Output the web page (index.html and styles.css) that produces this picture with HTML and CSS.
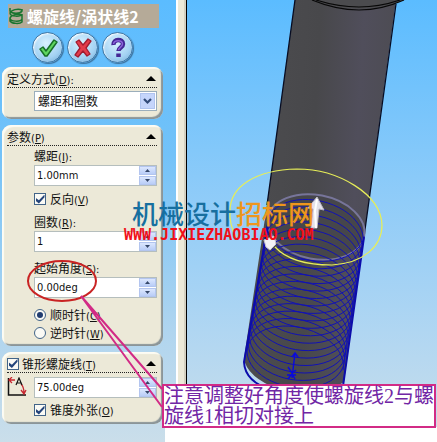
FILE: index.html
```html
<!DOCTYPE html>
<html lang="zh-CN">
<head>
<meta charset="utf-8">
<title>螺旋线/涡状线2</title>
<link rel="stylesheet" href="styles.css">
</head>
<body>
<main class="app">
  <form class="panel">
    <h1 class="title">
      <svg class="title-icon" width="16" height="18" viewBox="0 0 16 18" fill="none" stroke="#18752f" stroke-width="1.500">
        <path d="M2 1v3c2 3 10 3 12 0V2M14 3C10 1 3 3 2 6c0 4 11 4 12 1M14 8C10 6 3 8 2 11c0 4 11 4 12 1V7M2 11v3c2 3 10 3 12 1v-3"/>
      </svg>
      <span>螺旋线/涡状线2</span>
    </h1>
    <div class="actions">
      <button class="round" type="button" aria-label="确定">
        <svg width="22" height="22" viewBox="0 0 22 22"><path d="M3 12l3-2 3 4 8-11 3 2L10 19H8z" fill="#5fd55f" stroke="#176f28" stroke-width="1.500" stroke-linejoin="round"/></svg>
      </button>
      <button class="round" type="button" aria-label="取消">
        <svg width="22" height="22" viewBox="0 0 22 22"><path d="M4 5l3-2 4 5 5-6 3 2-5 7 4 6-3 2-4-5-5 6-3-2 5-7z" fill="#e33b4b" stroke="#a01b30" stroke-width="1.300" stroke-linejoin="round"/></svg>
      </button>
      <button class="round" type="button" aria-label="帮助">
        <svg width="22" height="22" viewBox="0 0 22 22" fill="none"><path d="M6.500 8C6 1.500 16 1.500 16 7c0 3.500-4.500 3.500-4.500 7M11.500 16.500v3.500" stroke="#442794" stroke-width="4.500"/><path d="M6.500 7C7 2.500 15.500 2.500 15.500 7c0 3-4 3.500-4 6" stroke="#8a62d8" stroke-width="1.500"/></svg>
      </button>
    </div>

    <section class="group">
      <header class="head"><label for="mode">定义方式<span class="key">(<u>D</u>):</span></label><button class="fold" type="button" aria-label="折叠"></button></header>
      <div class="body mode-body">
        <div class="combo">
          <select id="mode"><option>螺距和圈数</option></select>
          <span class="combo-arrow"><svg width="9" height="7" viewBox="0 0 9 7"><path d="M1 1l3.500 3.500L8 1" fill="none" stroke="#324a78" stroke-width="2.200"/></svg></span>
        </div>
      </div>
    </section>

    <section class="group">
      <header class="head"><span>参数<span class="key">(<u>P</u>)</span></span><button class="fold" type="button" aria-label="折叠"></button></header>
      <div class="body params">
        <label class="caption" for="pitch">螺距<span class="key">(<u>I</u>):</span></label>
        <div class="spin"><input id="pitch" type="text" value="1.00mm"><span class="steps"><button type="button" class="up" aria-label="增加"></button><button type="button" class="down" aria-label="减少"></button></span></div>
        <label class="check"><input type="checkbox" checked><span>反向<span class="key">(<u>V</u>)</span></span></label>
        <label class="caption" for="turns">圈数<span class="key">(<u>R</u>):</span></label>
        <div class="spin"><input id="turns" type="text" value="1"><span class="steps"><button type="button" class="up" aria-label="增加"></button><button type="button" class="down" aria-label="减少"></button></span></div>
        <label class="caption spaced" for="start">起始角度<span class="key">(<u>S</u>):</span></label>
        <div class="spin"><input id="start" type="text" value="0.00deg"><span class="steps"><button type="button" class="up" aria-label="增加"></button><button type="button" class="down" aria-label="减少"></button></span></div>
        <div class="radios">
          <label class="radio"><input type="radio" name="dir" checked><span>顺时针<span class="key">(<u>C</u>)</span></span></label>
          <label class="radio"><input type="radio" name="dir"><span>逆时针<span class="key">(<u>W</u>)</span></span></label>
        </div>
      </div>
    </section>

    <section class="group">
      <header class="head"><label class="check head-check"><input type="checkbox" checked><span>锥形螺旋线<span class="key">(<u>T</u>)</span></span></label><button class="fold" type="button" aria-label="折叠"></button></header>
      <div class="body taper">
        <svg class="angle" width="20" height="20" viewBox="0 0 20 20" fill="none">
          <path d="M1.500 1v17H19" stroke="#111" stroke-width="1.500"/>
          <path d="M2 3h6M5 0L2 3l3 3M14 7c2 2 3 5 3 9M14 13l3 4 2-4" stroke="#c72730" stroke-width="1.300"/>
          <path d="M9 8l3-7 3 7M10 6h4" stroke="#111" stroke-width="1.200"/>
        </svg>
        <div class="spin"><input type="text" value="75.00deg" aria-label="锥形角度"><span class="steps"><button type="button" class="up" aria-label="增加"></button><button type="button" class="down" aria-label="减少"></button></span></div>
        <label class="check outward"><input type="checkbox" checked><span>锥度外张<span class="key">(<u>O</u>)</span></span></label>
      </div>
    </section>
  </form>
  <div class="splitter"></div>
  <div class="viewport">
    <svg class="model" width="250" height="442" viewBox="187 0 250 442">
      <defs>
        <linearGradient id="steel" x1="0" x2="1" y1="0" y2="0.14">
          <stop offset="0" stop-color="#4d4d50"/><stop offset=".5" stop-color="#48484b"/><stop offset=".78" stop-color="#504e5b"/><stop offset="1" stop-color="#4d4c53"/>
        </linearGradient>
      </defs>
      <path d="M295 0H396L364 237 344 382Q320 400 280 390 246 377 244 358L267 205z" fill="url(#steel)"/>
      <path d="M295 0L267 205M396 4L364 237" fill="none" stroke="#070c22" stroke-width="1.300"/>
      <path d="M312 0q50 18 92 0z" fill="#4b4b4e"/>
      <path d="M312 0Q360 20 404 0M316 0Q360 14 400 0" fill="none" stroke="#080808" stroke-width="1.200"/>
      <ellipse cx="316" cy="227" rx="49" ry="32" transform="rotate(11 316 227)" fill="#46464b" stroke="#77759a" stroke-width="2"/>
      <path id="helix" fill="none" stroke="#1111b5" stroke-width="1"/>
      <path d="M269 220L244 362Q245 382 272 390M364 237L343 386" fill="none" stroke="#0c0cab" stroke-width="2"/>
      <path d="M295 353l-3 25M292 357l3-4 3 4M288 367l4 6 4-3M288 379l4-5 3 5M287 375h9" fill="none" stroke="#0909df" stroke-width="1.400"/>
      <path d="M275 247C287 260 309 265 332 265C364 263 382 246 382 225C381 194 338 169 297 169C256 170 230 186 230 211Q229 224 236 237" fill="none" stroke="#e7ee58" stroke-width="1.200"/>
      <path d="M311 228l2-19-5-1 9-11 7 13-5-1-2 19z" fill="#e4e2ea" stroke="#bbb8c5"/>
      <path d="M317 199l-2 12 1 17" fill="none" stroke="#fff" stroke-width="2"/>
      <path d="M264 240l10-4 2 8-6 6-4-3z" fill="#f3f1f6" stroke="#c7c4ce"/>
    </svg>
  </div>
  <div class="sheet-edge"></div>
  <svg class="markup" width="165" height="427" viewBox="0 0 165 427" fill="none">
    <ellipse cx="62" cy="281" rx="34" ry="20" stroke="#c92323" stroke-width="2"/>
    <path d="M162 389L81 296 162 407" stroke="#d22b86" stroke-width="2"/>
  </svg>
  <div class="watermark">
    <div class="brand">机械设计<span>招标网</span></div>
    <div class="url">WWW.JIXIEZHAOBIAO.COM</div>
  </div>
  <p class="callout">注意调整好角度使螺旋线2与螺<br>旋线1相切对接上</p>
</main>
<script src="helix.js"></script>
</body>
</html>
```
FILE: styles.css
```css
* { box-sizing: border-box; }
body {
  margin: 0;
  background: #fff;
  font: 12px/18px "Noto Sans CJK SC", sans-serif;
  color: #111;
}
.app {
  position: relative;
  display: flex;
  min-height: 100vh;
  overflow: hidden;
}
.panel {
  flex: 0 0 176px;
  min-width: 0;
  padding: 4px 13px 0 2px;
  background: linear-gradient(#5bbcff, #73c2f8 35%, #b0d5ef 75%, #cadeea);
}
.title {
  display: flex;
  align-items: center;
  gap: 3px;
  height: 24px;
  margin: 0 4px 4px 6px;
  background: #b5aa98;
  color: #fff;
  font-size: 16px;
  font-weight: 700;
  line-height: 24px;
  white-space: nowrap;
}
.title-icon { flex: none; }
.actions {
  display: flex;
  gap: 4px;
  height: 35px;
  padding-left: 30px;
}
.round {
  display: grid;
  place-items: center;
  width: 31px;
  height: 31px;
  padding: 0;
  border: 1px solid #4378a4;
  border-radius: 50%;
  background: radial-gradient(circle at 45% 35%, #d8f1ff, #a3d2f3 60%, #6ca7d4);
  box-shadow: inset 1px 1px 2px #fff, 1px 1px 1px #3c719c;
}
.group {
  margin-bottom: 6px;
  padding: 0 6px 0 5px;
  background: #ece9d8;
  border-radius: 9px;
  box-shadow: inset 2px 2px 1px #fdfcf4, inset -2px -2px 1px #8b9598;
}
.head {
  display: flex;
  align-items: center;
  justify-content: space-between;
  height: 21px;
  padding-top: 3px;
  border-bottom: 1px dotted #222;
  white-space: nowrap;
}
.key { font: 11px "DejaVu Sans Condensed", sans-serif; }
.fold {
  width: 10px;
  height: 5px;
  margin-right: 1px;
  padding: 0;
  border: 0;
  background: #000;
  clip-path: polygon(50% 0, 100% 100%, 0 100%);
}
.body { padding-left: 27px; }
.mode-body { padding-top: 3px; padding-bottom: 8px; }
.combo {
  display: grid;
  grid-template-columns: minmax(0, 1fr);
  border: 1px solid #9baebb;
  background: #fff;
}
.combo > * { grid-area: 1 / 1; }
select {
  width: 100%;
  height: 18px;
  padding: 0 20px 0 3px;
  border: 0;
  appearance: none;
  background: #fff;
  color: #111;
  font: inherit;
}
.combo-arrow {
  justify-self: end;
  display: grid;
  place-items: center;
  width: 15px;
  margin: 1px;
  border: 1px solid #b0c4ef;
  background: #c5d5fb;
  pointer-events: none;
}
.params { padding-bottom: 4px; }
.caption { display: block; height: 19px; line-height: 19px; }
.spaced { margin-top: 6px; }
.spin {
  display: flex;
  min-width: 0;
  height: 21px;
  border: 1px solid #b5bebd;
  background: #fff;
}
.spin input {
  flex: 1;
  width: 100%;
  min-width: 0;
  padding: 0 0 0 2px;
  border: 0;
  background: none;
  color: #111;
  font: 11px "DejaVu Sans Condensed", sans-serif;
}
.steps { display: grid; flex: none; gap: 1px; width: 17px; }
.steps button {
  display: grid;
  place-items: center;
  padding: 0;
  border: 1px solid #b3c5ef;
  background: linear-gradient(#dce7fe, #b9cdf7);
}
.steps button::after {
  content: "";
  width: 5px;
  height: 3px;
  background: #354769;
  clip-path: polygon(50% 0, 100% 100%, 0 100%);
}
.steps .down::after { clip-path: polygon(0 0, 100% 0, 50% 100%); }
.check, .radio { display: flex; align-items: center; gap: 4px; white-space: nowrap; }
.check { height: 26px; }
.check input, .radio input {
  appearance: none;
  display: grid;
  place-items: center;
  flex: none;
  width: 12px;
  height: 12px;
  margin: 0;
  border: 1px solid #426488;
  background: #fafaf5;
}
.check input:checked::after {
  content: "";
  width: 9px;
  height: 9px;
  background: #24447a;
  clip-path: polygon(0 35%, 38% 65%, 100% 0, 100% 30%, 38% 100%, 0 70%);
}
.radio { height: 18px; }
.radio input { border-radius: 50%; }
.radio input:checked::after { content: ""; width: 6px; height: 6px; border-radius: 50%; background: #213d70; }
.radios { padding-top: 8px; }
.head-check { height: 17px; gap: 3px; }
.taper {
  display: grid;
  grid-template-columns: 27px minmax(0, 1fr);
  padding: 4px 0 2px;
}
.outward { grid-column: 2; height: 24px; }
.splitter {
  flex: 0 0 11px;
  border: solid #fff;
  border-width: 0 1px 0 2px;
  background: #ece9d8;
  box-shadow: inset -2px 0 #d4d0c0;
  border-right-color: #000;
}
.viewport {
  flex: 1;
  min-width: 0;
  overflow: hidden;
  background: linear-gradient(#5bbcff, #8acaf9 40%, #b0d6f2 75%, #cadeea);
}
.model { display: block; }
.markup { position: absolute; left: 0; top: 0; pointer-events: none; }
.sheet-edge { position: absolute; left: 165px; right: 0; top: 427px; bottom: 0; background: #fff; }
.watermark {
  position: absolute;
  left: 124px;
  top: 199px;
  white-space: nowrap;
  pointer-events: none;
}
.brand {
  padding-left: 8px;
  color: #176f9f;
  font-size: 26px;
  font-weight: 500;
  line-height: 28px;
}
.brand span { color: #ee961d; }
.url { color: #f0101a; font: 700 15px/16px "DejaVu Sans Mono", monospace; }
.callout {
  position: absolute;
  left: 162px;
  top: 384px;
  margin: 0;
  border: 2px solid #d22b86;
  background: #fff;
  color: #7126a5;
  font: 20px/20px "Liberation Serif", "Noto Sans CJK SC", sans-serif;
  white-space: nowrap;
}
```
FILE: helix.js
```js
// Projects the thread helix onto the view plane as one polyline.
const turns = 18;
const stepsPerTurn = 48;
const tilt = 11 * Math.PI / 180;
const points = [];
for (let i = 0; i <= turns * stepsPerTurn; i++) {
  const f = i / (turns * stepsPerTurn);
  const a = 2 * Math.PI * i / stepsPerTurn;
  const u = 49 * Math.cos(a);
  const v = 32 * Math.sin(a);
  const x = 316 - 21 * f + u * Math.cos(tilt) - v * Math.sin(tilt);
  const y = 227 + 134 * f + u * Math.sin(tilt) + v * Math.cos(tilt);
  points.push(x.toFixed(1) + " " + y.toFixed(1));
}
document.getElementById("helix").setAttribute("d", "M" + points.join("L"));
```
